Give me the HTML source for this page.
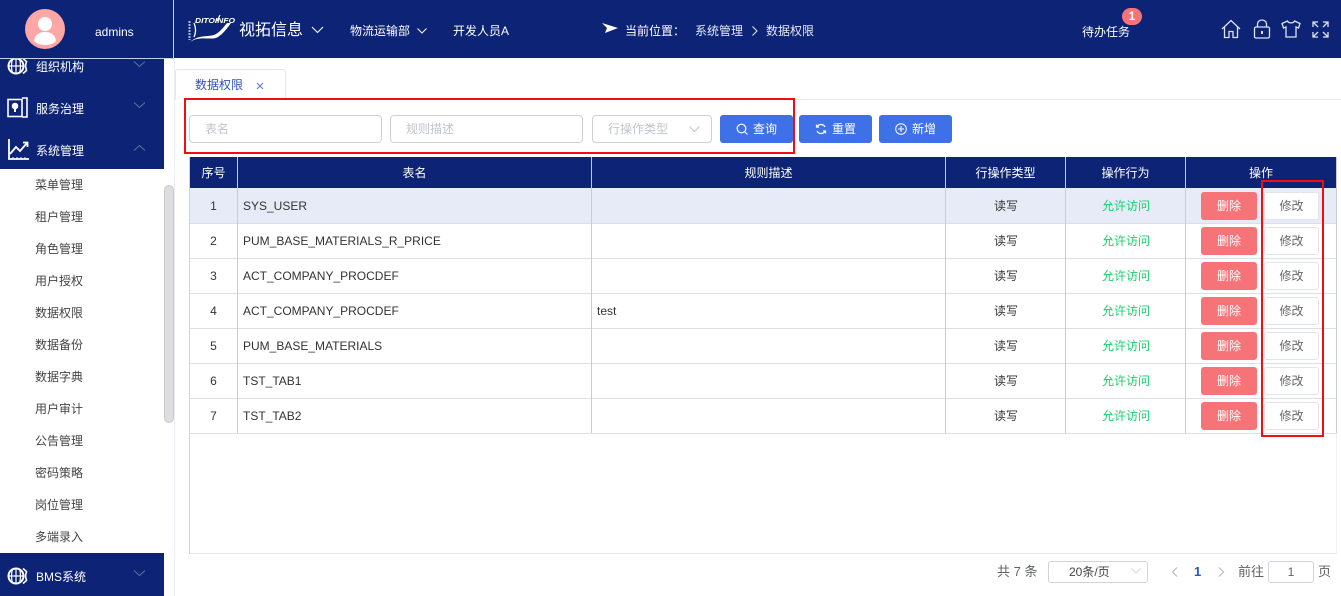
<!DOCTYPE html>
<html><head><meta charset="utf-8">
<style>
*{box-sizing:border-box}
html,body{margin:0;padding:0}
body{width:1341px;height:596px;position:relative;overflow:hidden;background:#fff;font-family:"Liberation Sans","Noto Sans CJK SC",sans-serif;font-size:12px;color:#333}
.a{position:absolute;white-space:nowrap}
.w{color:#fff}
.m{position:absolute;left:35px;color:#444;font-size:12px;line-height:16px}
.nav{position:absolute;left:0;width:164px;background:#0c2376}
.inp{position:absolute;top:115px;height:28px;border:1px solid #d0d0d4;border-radius:4px;background:#fff;color:#c0c4cc;font-size:12px;line-height:27px;padding-left:15px}
.btn{position:absolute;top:115px;width:73px;height:28px;background:#3e71e8;border-radius:3px;color:#fff;font-size:12px;line-height:28px;padding-left:33px}
.btn svg{position:absolute;left:16px;top:8px}
.th{position:absolute;top:157px;height:31px;line-height:33px;text-align:center;color:#fff;background:#0c2376;border-right:1px solid #c8ccd8}
.row{position:absolute;left:190px;width:1146px;height:35px;border-bottom:1px solid #dcdfe6}
.vl{position:absolute;top:188px;width:1px;height:245px;background:#c9ccd6}
.c{position:absolute;line-height:34px;height:34px;color:#333}
.del{position:absolute;left:1011px;top:3px;width:56px;height:28px;background:#f67377;color:#fff;border-radius:3px;text-align:center;line-height:28px}
.mod{position:absolute;left:1074px;top:3px;width:55px;height:28px;background:#fff;border:1px solid #e2e4ec;border-radius:3px;color:#666;text-align:center;line-height:27px}
.chev{position:absolute;left:133px}
</style></head>
<body>
<!-- header -->
<div class="a" style="left:0;top:0;width:1341px;height:58px;background:#0c2376"></div>
<div class="a" style="left:173px;top:0;width:1px;height:58px;background:#c8cfe6"></div>
<div class="a" style="left:0;top:58px;width:174px;height:1px;background:#c8cfe6"></div>
<svg class="a" style="left:25px;top:9px" width="40" height="40" viewBox="0 0 40 40"><circle cx="20" cy="20" r="20" fill="#ffa6a6"/><circle cx="20" cy="15" r="7" fill="#fff"/><path d="M9 32c1-7 6-9 11-9s10 2 11 9c-3 3-7 4-11 4s-8-1-11-4z" fill="#fff"/></svg>
<div class="a w" style="left:95px;top:24px;line-height:16px">admins</div>
<svg class="a" style="left:186px;top:13px" width="52" height="33" viewBox="0 0 52 33" fill="none" stroke="#fff"><path d="M4 29C14 22 26 28 32 24 38 20 42 14 45 10L41 10C37 15 33 20 28 22 20 24 12 22 4 29z" fill="#fff" stroke="none"/><path d="M8 10C10 15 10 20 8 24" stroke-width="1.300"/><path d="M34 2L31 8" stroke-width="1.200"/><path d="M3.500 8v19" stroke-width="2" stroke-dasharray="2 1" stroke="#aeb8d8"/><text x="9" y="10" font-size="7" font-style="italic" font-weight="bold" fill="#fff" stroke="none" font-family="Liberation Sans" textLength="40" lengthAdjust="spacingAndGlyphs">DITOINFO</text></svg>
<div class="a w" style="left:239px;top:20px;font-size:16px;line-height:21px">视拓信息</div>
<svg class="a" style="left:311px;top:26px" width="13" height="8" fill="none" stroke="#fff" stroke-width="1.1"><path d="M1 1l5.500 5.500L12 1"/></svg>
<div class="a w" style="left:350px;top:23px;line-height:17px">物流运输部</div>
<svg class="a" style="left:417px;top:28px" width="10" height="6" fill="none" stroke="#fff"><path d="M.5.500l4.500 4.500L9.500.500"/></svg>
<div class="a w" style="left:453px;top:23px;line-height:17px">开发人员A</div>
<svg class="a" style="left:602px;top:23px" width="16" height="11"><path d="M0 0l16 5-13 5 2-5z" fill="#fff"/></svg>
<div class="a w" style="left:625px;top:23px;line-height:17px">当前位置：</div>
<div class="a" style="left:695px;top:23px;line-height:17px;color:#e8ebf5">系统管理</div>
<svg class="a" style="left:752px;top:26px" width="6" height="10" fill="none" stroke="#e8ebf5"><path d="M.5.500L5 5 .5 9.500"/></svg>
<div class="a" style="left:766px;top:23px;line-height:17px;color:#e8ebf5">数据权限</div>
<div class="a w" style="left:1082px;top:24px;line-height:17px">待办任务</div>
<div class="a w" style="left:1122px;top:8px;width:20px;height:17px;background:#f67377;border-radius:9px;text-align:center;font-size:12px;font-weight:bold;line-height:17px">1</div>
<svg class="a" style="left:1221px;top:19px" width="20" height="20" fill="none" stroke="#dfe3f2" stroke-width="1.300"><path d="M1 10L10 1.500 19 10M3.500 8v10.500h4.500v-6h4v6h4.500V8"/></svg>
<svg class="a" style="left:1253px;top:19px" width="18" height="20" fill="none" stroke="#dfe3f2" stroke-width="1.300"><rect x="1.500" y="8" width="15" height="11" rx="1.500"/><path d="M4.500 8V5a4.500 4 0 0 1 9 0v3"/><path d="M9 12v3" stroke-width="2"/></svg>
<svg class="a" style="left:1281px;top:20px" width="20" height="18" fill="none" stroke="#dfe3f2" stroke-width="1.300"><path d="M6.500 1C7.500 3.500 12.500 3.500 13.500 1L19 3.500 17.500 8 15 7v10H5V7L2.500 8 1 3.500z"/></svg>
<svg class="a" style="left:1311px;top:20px" width="19" height="19" fill="none" stroke="#dfe3f2" stroke-width="1.300"><path d="M2 2l5 5M2 7V2h5M17 2l-5 5M12 2h5v5M2 17l5-5M2 12v5h5M17 17l-5-5M17 12v5h-5"/></svg>

<!-- sidebar -->
<div class="nav" style="top:59px;height:110px"></div>
<div class="nav" style="top:553px;height:43px"></div>
<svg class="a" style="left:6px;top:59px" width="22" height="17" viewBox="0 4 22 17" fill="none" stroke="#fff"><circle cx="10" cy="11" r="7.500" stroke-width="2"/><path d="M2.500 11h15M10 3.500v15M6.500 4c-1.300 4.500-1.300 9.500 0 14M13.500 4c1.300 4.500 1.300 9.500 0 14" stroke-width="1.200"/><path d="M17 3.500l3.500 3-1 4.500 1 4.500-3.500 3" stroke-width="1.600"/></svg>
<div class="a w" style="left:36px;top:59px;line-height:17px">组织机构</div>
<svg class="chev" style="top:61px" width="13" height="6" fill="none" stroke="#5f709f"><path d="M1 .500l5.500 5 5.500-5"/></svg>
<svg class="a" style="left:7px;top:97px" width="21" height="22" fill="none" stroke="#fff" stroke-width="1.600"><rect x="1" y="2.500" width="14" height="17"/><path d="M15 1h5v19h-5"/><circle cx="8" cy="9" r="2.500" fill="#fff"/><path d="M8 10v5" stroke-width="2"/></svg>
<div class="a w" style="left:36px;top:101px;line-height:17px">服务治理</div>
<svg class="chev" style="top:102px" width="13" height="6" fill="none" stroke="#5f709f"><path d="M1 .500l5.500 5 5.500-5"/></svg>
<svg class="a" style="left:8px;top:139px" width="21" height="22" fill="none" stroke="#fff" stroke-width="1.800"><path d="M1 0v20h20"/><path d="M2 15l6-7 4 4 7-8"/><path d="M15 3.500h4.500V8"/><path d="M5 20v-2M9 20v-2M13 20v-2M17 20v-2" stroke-width="1"/></svg>
<div class="a w" style="left:36px;top:143px;line-height:17px">系统管理</div>
<svg class="chev" style="top:145px" width="13" height="6" fill="none" stroke="#5f709f"><path d="M1 5.500l5.500-5 5.500 5"/></svg>
<div class="m" style="top:177px">菜单管理</div>
<div class="m" style="top:209px">租户管理</div>
<div class="m" style="top:241px">角色管理</div>
<div class="m" style="top:273px">用户授权</div>
<div class="m" style="top:305px">数据权限</div>
<div class="m" style="top:337px">数据备份</div>
<div class="m" style="top:369px">数据字典</div>
<div class="m" style="top:401px">用户审计</div>
<div class="m" style="top:433px">公告管理</div>
<div class="m" style="top:465px">密码策略</div>
<div class="m" style="top:497px">岗位管理</div>
<div class="m" style="top:529px">多端录入</div>
<svg class="a" style="left:6px;top:565px" width="22" height="22" fill="none" stroke="#fff"><circle cx="10" cy="11" r="7.500" stroke-width="2"/><path d="M2.500 11h15M10 3.500v15M6.500 4c-1.300 4.500-1.300 9.500 0 14M13.500 4c1.300 4.500 1.300 9.500 0 14" stroke-width="1.200"/><path d="M17 3.500l3.500 3-1 4.500 1 4.500-3.500 3" stroke-width="1.600"/></svg>
<div class="a w" style="left:36px;top:569px;line-height:17px">BMS系统</div>
<svg class="chev" style="top:570px" width="13" height="6" fill="none" stroke="#5f709f"><path d="M1 .500l5.500 5 5.500-5"/></svg>
<div class="a" style="left:164px;top:185px;width:10px;height:238px;background:#dedede;border:1px solid #c9c9c9;border-radius:5px"></div>
<div class="a" style="left:174px;top:59px;width:1px;height:537px;background:#eceef3"></div>

<!-- tabs -->
<div class="a" style="left:175px;top:99px;width:1166px;height:1px;background:#e4e7ed"></div>
<div class="a" style="left:175px;top:69px;width:111px;height:31px;border:1px solid #e4e7ed;border-bottom:none;border-radius:3px 3px 0 0;background:#fff"></div>
<div class="a" style="left:195px;top:77px;line-height:16px;color:#2f51c4">数据权限</div>
<svg class="a" style="left:256px;top:82px" width="8" height="8" fill="none" stroke="#5b74c8"><path d="M1 1l6 6M7 1L1 7"/></svg>

<!-- search -->
<div class="inp" style="left:189px;width:193px">表名</div>
<div class="inp" style="left:390px;width:193px">规则描述</div>
<div class="inp" style="left:592px;width:120px">行操作类型</div>
<svg class="a" style="left:689px;top:126px" width="11" height="7" fill="none" stroke="#c0c4cc"><path d="M.5.500l5 5 5-5"/></svg>
<div class="btn" style="left:720px"><svg width="12" height="12" fill="none" stroke="#fff" stroke-width="1.200"><circle cx="5.500" cy="5.500" r="4.300"/><path d="M8.700 8.700L11.500 11.500"/></svg>查询</div>
<div class="btn" style="left:799px"><svg width="12" height="12" fill="none" stroke="#fff" stroke-width="1.200"><path d="M10 4A4.500 4.500 0 0 0 2.200 3.500M2 8a4.500 4.500 0 0 0 7.800.500"/><path d="M1.500 1.500v2.500h2.500M10.500 10.500V8H8"/></svg>重置</div>
<div class="btn" style="left:879px"><svg width="12" height="12" fill="none" stroke="#fff" stroke-width="1"><circle cx="6" cy="6" r="5.300"/><path d="M6 3v6M3 6h6"/></svg>新增</div>
<div class="a" style="left:184px;top:98px;width:611px;height:56px;border:2px solid #f20d12"></div>

<!-- table -->
<div class="a" style="left:189px;top:157px;width:1148px;height:397px;border-left:1px solid #d0d2d8;border-bottom:1px solid #e8e9ec;border-right:1px solid #f0f0f2"></div>
<div class="th" style="left:190px;width:48px">序号</div>
<div class="th" style="left:238px;width:354px">表名</div>
<div class="th" style="left:592px;width:354px">规则描述</div>
<div class="th" style="left:946px;width:120px">行操作类型</div>
<div class="th" style="left:1066px;width:120px">操作行为</div>
<div class="th" style="left:1186px;width:150px;border-right:none">操作</div>

<div class="row" style="top:188px;height:36px;background:#e7ebf7;padding-top:1px"><div class="c" style="left:0;top:1px;width:47px;text-align:center">1</div><div class="c" style="left:53px;top:1px">SYS_USER</div><div class="c" style="left:756px;top:1px;width:120px;text-align:center">读写</div><div class="c" style="left:876px;top:1px;width:120px;text-align:center;color:#19cf6b">允许访问</div><div class="del" style="top:4px">删除</div><div class="mod" style="top:4px">修改</div></div>
<div class="row" style="top:224px"><div class="c" style="left:0;width:47px;text-align:center">2</div><div class="c" style="left:53px">PUM_BASE_MATERIALS_R_PRICE</div><div class="c" style="left:756px;width:120px;text-align:center">读写</div><div class="c" style="left:876px;width:120px;text-align:center;color:#19cf6b">允许访问</div><div class="del">删除</div><div class="mod">修改</div></div>
<div class="row" style="top:259px"><div class="c" style="left:0;width:47px;text-align:center">3</div><div class="c" style="left:53px">ACT_COMPANY_PROCDEF</div><div class="c" style="left:756px;width:120px;text-align:center">读写</div><div class="c" style="left:876px;width:120px;text-align:center;color:#19cf6b">允许访问</div><div class="del">删除</div><div class="mod">修改</div></div>
<div class="row" style="top:294px"><div class="c" style="left:0;width:47px;text-align:center">4</div><div class="c" style="left:53px">ACT_COMPANY_PROCDEF</div><div class="c" style="left:407px">test</div><div class="c" style="left:756px;width:120px;text-align:center">读写</div><div class="c" style="left:876px;width:120px;text-align:center;color:#19cf6b">允许访问</div><div class="del">删除</div><div class="mod">修改</div></div>
<div class="row" style="top:329px"><div class="c" style="left:0;width:47px;text-align:center">5</div><div class="c" style="left:53px">PUM_BASE_MATERIALS</div><div class="c" style="left:756px;width:120px;text-align:center">读写</div><div class="c" style="left:876px;width:120px;text-align:center;color:#19cf6b">允许访问</div><div class="del">删除</div><div class="mod">修改</div></div>
<div class="row" style="top:364px"><div class="c" style="left:0;width:47px;text-align:center">6</div><div class="c" style="left:53px">TST_TAB1</div><div class="c" style="left:756px;width:120px;text-align:center">读写</div><div class="c" style="left:876px;width:120px;text-align:center;color:#19cf6b">允许访问</div><div class="del">删除</div><div class="mod">修改</div></div>
<div class="row" style="top:399px"><div class="c" style="left:0;width:47px;text-align:center">7</div><div class="c" style="left:53px">TST_TAB2</div><div class="c" style="left:756px;width:120px;text-align:center">读写</div><div class="c" style="left:876px;width:120px;text-align:center;color:#19cf6b">允许访问</div><div class="del">删除</div><div class="mod">修改</div></div>
<div class="vl" style="left:237px"></div><div class="vl" style="left:591px"></div><div class="vl" style="left:945px"></div><div class="vl" style="left:1065px"></div><div class="vl" style="left:1185px"></div><div class="vl" style="left:1336px;top:157px;height:276px"></div>
<div class="a" style="left:1261px;top:180px;width:63px;height:257px;border:2px solid #f20d12"></div>

<!-- pagination -->
<div class="a" style="left:997px;top:564px;font-size:13px;line-height:16px;color:#606266">共 7 条</div>
<div class="a" style="left:1048px;top:561px;width:100px;height:22px;border:1px solid #d0d3da;border-radius:3px;font-size:12px;line-height:20px;color:#444;padding-left:20px">20条/页</div>
<svg class="a" style="left:1131px;top:568px" width="10" height="6" fill="none" stroke="#d4d7de"><path d="M.5.500L5 5 9.500.500"/></svg>
<svg class="a" style="left:1171px;top:567px" width="7" height="10" fill="none" stroke="#b5b9c4" stroke-width="1.200"><path d="M6 .500L1.500 5 6 9.500"/></svg>
<div class="a" style="left:1194px;top:564px;font-size:13px;font-weight:bold;line-height:16px;color:#2a54c8">1</div>
<svg class="a" style="left:1218px;top:567px" width="7" height="10" fill="none" stroke="#b5b9c4" stroke-width="1.200"><path d="M1 .500L5.500 5 1 9.500"/></svg>
<div class="a" style="left:1238px;top:564px;font-size:13px;line-height:16px;color:#606266">前往</div>
<div class="a" style="left:1268px;top:561px;width:46px;height:22px;border:1px solid #d0d3da;border-radius:3px;text-align:center;line-height:21px;color:#606266">1</div>
<div class="a" style="left:1318px;top:564px;font-size:13px;line-height:16px;color:#606266">页</div>
</body></html>
